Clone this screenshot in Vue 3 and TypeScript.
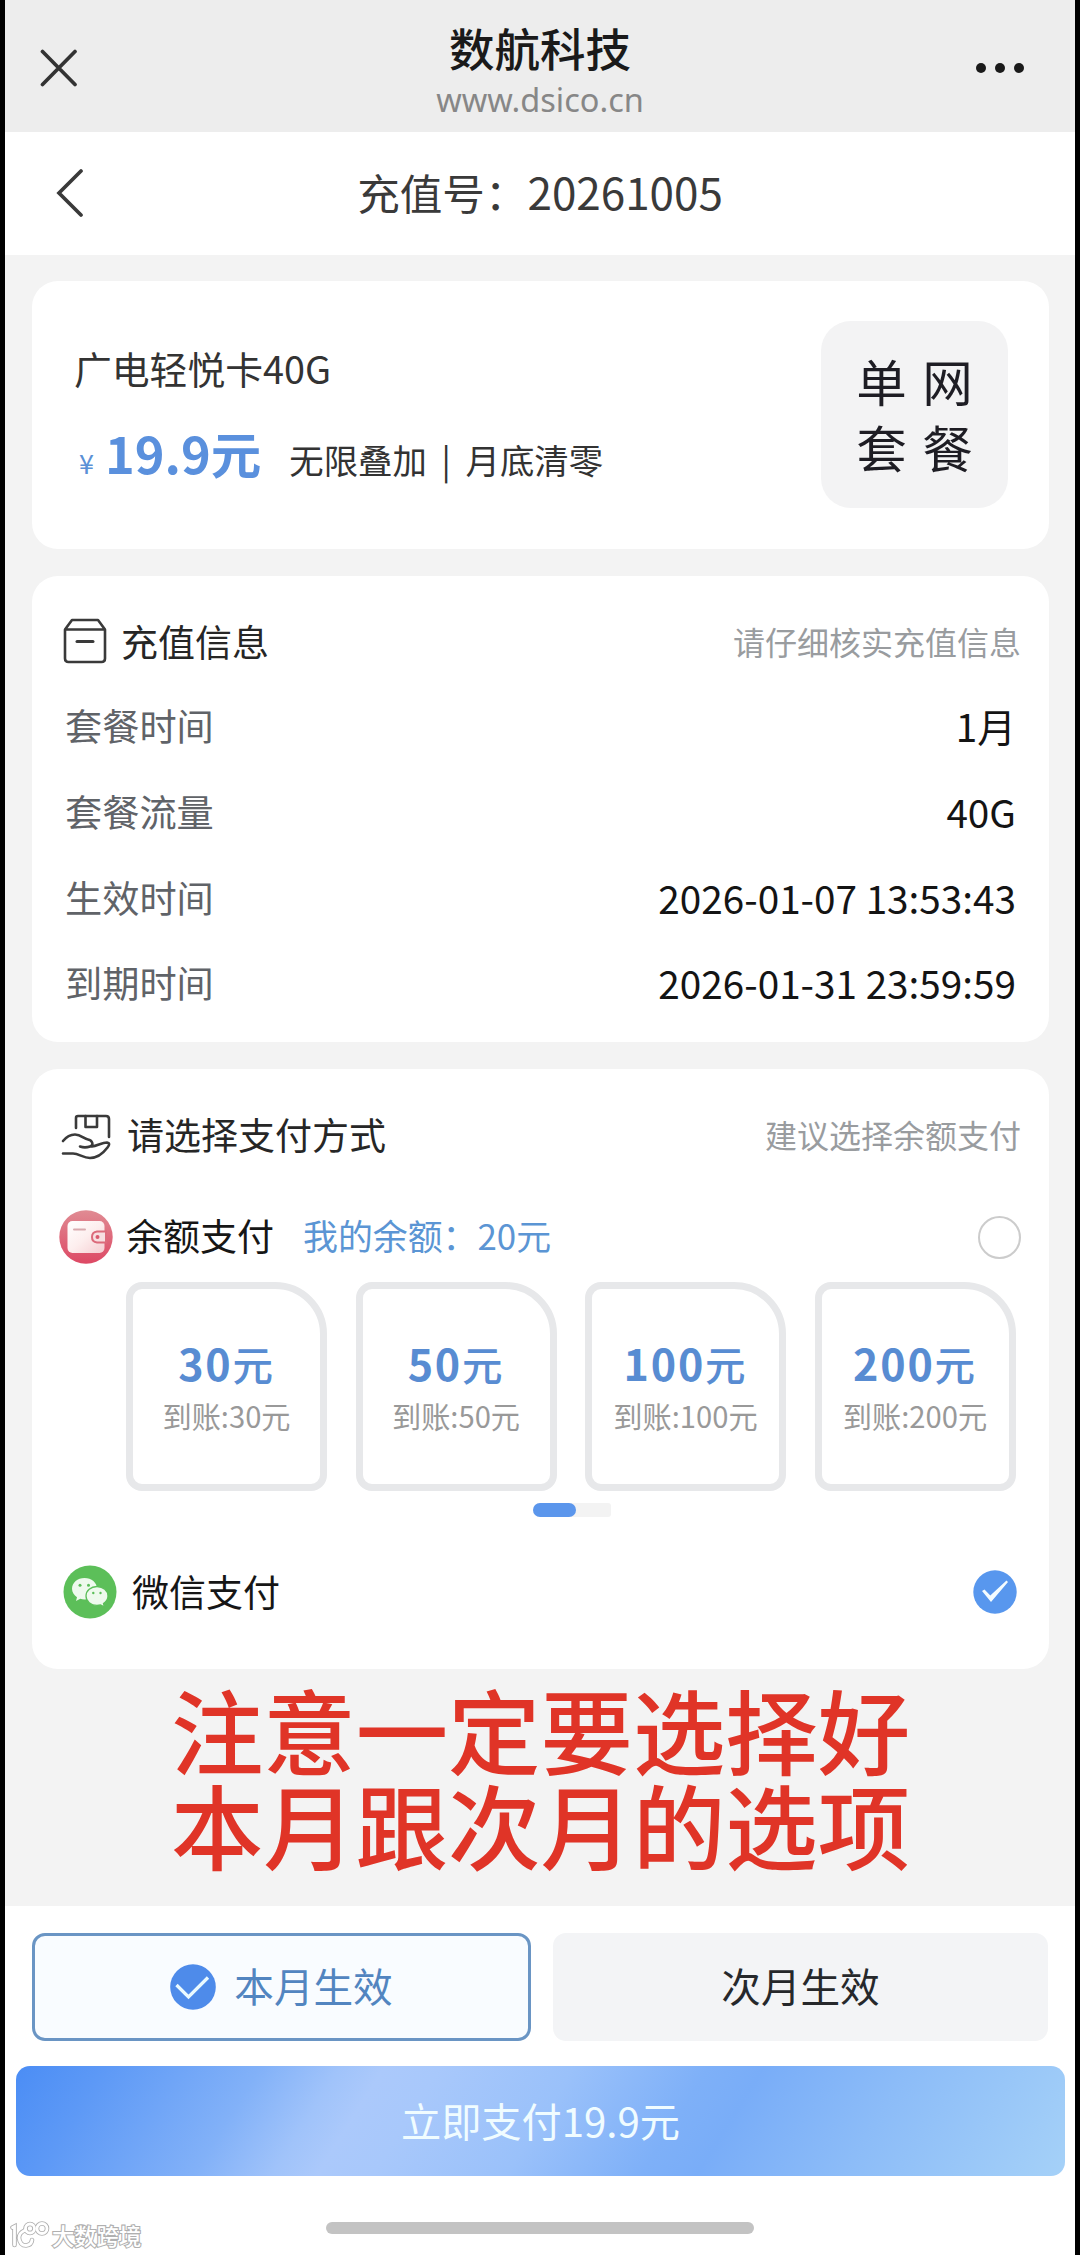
<script setup lang="ts">
import { ref } from 'vue'

interface InfoRow {
  label: string
  value: string
}

interface TopUp {
  amount: number
}

const infoRows: InfoRow[] = [
  { label: '套餐时间', value: '1月' },
  { label: '套餐流量', value: '40G' },
  { label: '生效时间', value: '2026-01-07 13:53:43' },
  { label: '到期时间', value: '2026-01-31 23:59:59' },
]

const topUps: TopUp[] = [{ amount: 30 }, { amount: 50 }, { amount: 100 }, { amount: 200 }]

const payMethod = ref<'balance' | 'wechat'>('wechat')
const period = ref<'current' | 'next'>('current')
</script>

<template>
  <div class="screen">
    <header class="titlebar">
      <svg class="close" viewBox="0 0 38 38"><path d="M2.5 2.5 35 35.5M35 2.5 2.5 35.5" /></svg>
      <div class="site">
        <div class="site-name">数航科技</div>
        <div class="site-url">www.dsico.cn</div>
      </div>
      <div class="more"><i></i><i></i><i></i></div>
    </header>

    <nav class="navbar">
      <svg class="back" viewBox="0 0 28 48"><path d="M25 2 3 24 25 46" /></svg>
      <div class="nav-title">充值号：<span>20261005</span></div>
    </nav>

    <main class="content">
      <section class="card plan">
        <div class="plan-info">
          <div class="plan-name">广电轻悦卡40G</div>
          <div class="plan-price">
            <span class="yen">¥</span>
            <span class="price">19.9元</span>
            <span class="terms">无限叠加 | 月底清零</span>
          </div>
        </div>
        <div class="plan-badge"><span>单网</span><span>套餐</span></div>
      </section>

      <section class="card info">
        <div class="card-head">
          <svg class="head-icon box" viewBox="0 0 44 46">
            <path d="M2 11.5 9 2H35L42 11.5M2 11.5H42V40.5Q42 44 38.5 44H5.5Q2 44 2 40.5Z" />
            <path d="M14 23.5H30" stroke-width="3" />
          </svg>
          <span class="head-title">充值信息</span>
          <span class="head-hint">请仔细核实充值信息</span>
        </div>
        <div v-for="row in infoRows" :key="row.label" class="info-row">
          <span class="label">{{ row.label }}</span>
          <span class="value">{{ row.value }}</span>
        </div>
      </section>

      <section class="card pay">
        <div class="card-head">
          <svg class="head-icon hand" viewBox="0 0 50 46">
            <path d="M15 14V4Q15 2 17 2H45Q48 2 48 5V23" />
            <path d="M24.5 2V13H36V2" />
            <path d="M2 27C6 22 10 20.5 14 20.5C20 20.5 23 25 27 25.5C31 26 33.5 31 29 32.5C26 33.5 22 33.5 19 32.5M31 32.5C36 32 41 28.5 46 28.5C49 29 48.5 31 46.5 33.5C42 39.5 36 44 29 44C22 44 18 39.5 12 39.5H2" />
          </svg>
          <span class="head-title">请选择支付方式</span>
          <span class="head-hint">建议选择余额支付</span>
        </div>

        <div class="method balance" @click="payMethod = 'balance'">
          <svg class="method-icon" viewBox="0 0 54 54">
            <defs>
              <linearGradient id="disc" x1="0" y1="0" x2="0" y2="1">
                <stop offset="0" stop-color="#e08b93" />
                <stop offset="1" stop-color="#dd4864" />
              </linearGradient>
              <linearGradient id="wallet" x1="0" y1="0" x2="1" y2="1">
                <stop offset="0" stop-color="#fff" />
                <stop offset=".5" stop-color="#fdeeee" />
                <stop offset="1" stop-color="#f5cdd1" />
              </linearGradient>
            </defs>
            <circle cx="27" cy="27" r="26.7" fill="url(#disc)" />
            <rect x="8.5" y="11" width="37" height="32" rx="5" fill="url(#wallet)" />
            <path d="M15 19.5H26" stroke="#d9a9ae" stroke-width="2" stroke-linecap="round" />
            <path d="M47 21.5H38Q33 22 33 27Q33 32 38 32.5H47Z" fill="#f7dfe1" stroke="#dc6b7b" stroke-width="2" />
            <circle cx="38.5" cy="27" r="2" fill="#d95a6e" />
          </svg>
          <span class="method-name">余额支付</span>
          <span class="method-note">我的余额：20元</span>
          <span class="radio"></span>
        </div>

        <div class="topups">
          <div v-for="item in topUps" :key="item.amount" class="topup">
            <div class="amount">{{ item.amount }}<span>元</span></div>
            <div class="credited">到账:{{ item.amount }}元</div>
          </div>
        </div>
        <div class="indicator"><i></i></div>

        <div class="method wechat" @click="payMethod = 'wechat'">
          <svg class="method-icon" viewBox="0 0 54 54">
            <circle cx="27" cy="27" r="26.5" fill="#5cbf59" />
            <path d="M21.5 13C14.5 13 9 17.7 9 23.8C9 27.3 11 30.3 14 32.3L13 36L17.3 33.8C18.7 34.2 20 34.5 21.5 34.5C28.5 34.5 34 29.8 34 23.8C34 17.7 28.5 13 21.5 13Z" fill="#eefaed" />
            <path d="M34 21.5C27.8 21.5 23 25.7 23 31C23 36.3 27.8 40.4 34 40.4C35.3 40.4 36.5 40.2 37.6 39.9L41.5 42L40.5 38.5C43.2 36.7 45 34 45 31C45 25.7 40.2 21.5 34 21.5Z" fill="#eefaed" stroke="#5cbf59" stroke-width="1.3" />
            <g fill="#5cbf59">
              <circle cx="17" cy="20.3" r="1.5" /><circle cx="25.5" cy="20.3" r="1.5" />
              <circle cx="30.3" cy="28" r="1.2" /><circle cx="37.5" cy="28" r="1.2" />
            </g>
          </svg>
          <span class="method-name">微信支付</span>
          <svg class="checked" viewBox="0 0 44 44">
            <circle cx="22" cy="22" r="21.7" fill="#5897ee" />
            <path d="M9 21 11.5 19.5 17.3 25.5 33.5 10.5 35 12 18 32Z" fill="#f4fcff" />
          </svg>
        </div>
      </section>

      <div class="notice">
        <div>注意一定要选择好</div>
        <div>本月跟次月的选项</div>
      </div>
    </main>

    <footer class="footer">
      <div class="periods">
        <button class="period active" @click="period = 'current'">
          <svg viewBox="0 0 46 46">
            <circle cx="23" cy="23" r="22.8" fill="#4e8bea" />
            <path d="M6.5 21 18.5 33 38 13.5" fill="none" stroke="#eafaff" stroke-width="3.3" />
          </svg>
          <span>本月生效</span>
        </button>
        <button class="period" @click="period = 'next'"><span>次月生效</span></button>
      </div>
      <button class="submit">立即支付19.9元</button>
      <div class="home-bar"></div>
    </footer>

    <div class="watermark">
      <svg viewBox="0 0 40 28">
        <g fill="none" stroke-linecap="round">
          <g stroke="#b0b0b0" stroke-width="4.6">
            <path d="M2.5 6.5 4.5 5.5V24M14.5 9.5Q9 12 9 17Q10 24.5 16 24.5Q21.5 24 22 19" />
            <circle cx="20" cy="7.5" r="4.5" /><circle cx="32" cy="7.5" r="5" />
          </g>
          <g stroke="#fff" stroke-width="2.8">
            <path d="M2.5 6.5 4.5 5.5V24M14.5 9.5Q9 12 9 17Q10 24.5 16 24.5Q21.5 24 22 19" />
            <circle cx="20" cy="7.5" r="4.5" /><circle cx="32" cy="7.5" r="5" />
          </g>
        </g>
      </svg>
      <span>大数跨境</span>
    </div>
  </div>
</template>

<style>
body {
  margin: 0;
  background: #000;
}
</style>

<style scoped>
.screen {
  position: relative;
  box-sizing: border-box;
  width: 1080px;
  height: 2255px;
  border-left: 5px solid #000;
  border-right: 5px solid #000;
  background: #f3f3f3;
  display: flex;
  flex-direction: column;
  overflow: hidden;
  font-family: 'Noto Sans CJK SC', 'Noto Sans', sans-serif;
  white-space: nowrap;
}

.titlebar {
  height: 132px;
  background: #ededed;
  display: grid;
  grid-template-columns: 200px 1fr 200px;
}

.close {
  width: 38px;
  height: 38px;
  margin: 49px 0 0 35px;
  fill: none;
  stroke: #333;
  stroke-width: 3.7;
  stroke-linecap: round;
}

.site {
  text-align: center;
}

.site-name {
  margin-top: 18px;
  font-size: 45.5px;
  line-height: 58px;
  font-weight: 500;
  color: #1a1a1a;
}

.site-url {
  font-family: 'Noto Sans', sans-serif;
  font-size: 32.5px;
  line-height: 44px;
  margin-top: 2px;
  color: #878787;
}

.more {
  display: flex;
  gap: 9px;
  margin: 63px 0 0 101px;
}

.more i {
  width: 10px;
  height: 10px;
  border-radius: 50%;
  background: #1a1a1a;
}

.navbar {
  height: 123px;
  background: #fff;
  display: grid;
  grid-template-columns: 200px 1fr 200px;
  align-items: center;
}

.back {
  width: 28px;
  height: 48px;
  margin: -2px 0 0 51px;
  fill: none;
  stroke: #3a3a3a;
  stroke-width: 3.7;
  stroke-linecap: round;
}

.nav-title {
  text-align: center;
  font-size: 42.6px;
  line-height: 60px;
  margin-top: -5px;
  color: #3a3a3a;
}

.nav-title span {
  font-size: 44px;
}

.content {
  flex: none;
  height: 1651px;
  box-sizing: border-box;
  padding: 26px 26px 0 27px;
}

.card {
  box-sizing: border-box;
  background: #fff;
  border-radius: 26px;
}

.plan {
  height: 268px;
  padding: 40px 41px 0 42px;
  display: flex;
  justify-content: space-between;
}

.plan-name {
  margin-top: 21px;
  font-size: 37.8px;
  line-height: 52px;
  color: #333;
}

.plan-price {
  margin-top: 22px;
  display: flex;
  align-items: baseline;
  line-height: 72px;
}

.yen {
  font-size: 27px;
  width: 31px;
  padding-left: 5px;
  box-sizing: border-box;
  color: #5b91d6;
}

.price {
  font-size: 50.5px;
  font-weight: 700;
  color: #5a90dd;
}

.terms {
  margin-left: 28px;
  font-size: 34.4px;
  word-spacing: 7px;
  color: #333;
}

.plan-badge {
  box-sizing: border-box;
  width: 187px;
  height: 187px;
  padding-bottom: 3px;
  border-radius: 30px;
  background: #f3f3f4;
  display: flex;
  flex-direction: column;
  align-items: center;
  justify-content: center;
}

.plan-badge span {
  font-size: 50.5px;
  line-height: 66.5px;
  letter-spacing: 15.5px;
  margin-right: -15.5px;
  color: #1e1d24;
}

.info {
  margin-top: 27px;
  height: 466px;
  padding: 24px 33px 0;
}

.card-head {
  height: 82px;
  display: flex;
  align-items: center;
}

.head-icon {
  fill: none;
  stroke: #3a3a3a;
  stroke-width: 2.6;
  stroke-linejoin: round;
  stroke-linecap: round;
  flex: none;
}

.box {
  width: 44px;
  height: 46px;
  margin-left: -2px;
}

.hand {
  width: 50px;
  height: 46px;
  margin: 6px 0 0 -4px;
}

.head-title {
  margin-left: 14px;
  font-size: 37px;
  color: #262626;
}

.pay .head-title {
  margin-left: 16px;
}

.head-hint {
  margin-left: auto;
  margin-right: -5px;
  font-size: 32px;
  color: #999c9f;
}

.info-row {
  height: 86px;
  display: flex;
  align-items: center;
  justify-content: space-between;
}

.info-row:last-child {
  height: 84px;
}

.label {
  font-size: 37.2px;
  color: #606368;
}

.value {
  font-size: 38.7px;
  color: #141414;
}

.pay {
  margin-top: 27px;
  height: 600px;
  padding: 24px 33px 0;
}

.method {
  display: flex;
  align-items: center;
}

.balance {
  margin-top: 13px;
  height: 94px;
}

.method-icon {
  width: 54px;
  height: 54px;
  flex: none;
}

.balance .method-icon {
  margin: 4px 0 0 -6px;
}

.method-name {
  margin-left: 13px;
  font-size: 37px;
  color: #161616;
}

.method-note {
  margin-left: 29px;
  font-size: 34.9px;
  color: #5b95d4;
}

.radio {
  box-sizing: border-box;
  width: 43px;
  height: 43px;
  margin: 4px -5px 0 auto;
  border: 2px solid #ccc;
  border-radius: 50%;
}

.topups {
  margin-left: 61px;
  display: flex;
  gap: 28.5px;
}

.topup {
  box-sizing: border-box;
  width: 201px;
  height: 209px;
  flex: none;
  border: 7px solid #e7e8ea;
  border-radius: 16px 52px 16px 16px;
  text-align: center;
  padding-top: 43px;
}

.amount {
  font-size: 43px;
  line-height: 60px;
  font-weight: 700;
  letter-spacing: 1.8px;
  color: #588cd2;
}

.amount span {
  font-size: 40.5px;
  font-weight: 500;
}

.credited {
  font-size: 29.2px;
  line-height: 42px;
  color: #999;
}

.indicator {
  width: 78px;
  height: 14px;
  margin: 12px 0 0 468px;
  border-radius: 7px 3px 3px 7px;
  background: #f3f3f3;
}

.indicator i {
  display: block;
  width: 43px;
  height: 14px;
  border-radius: 7px;
  background: #5b96ec;
}

.wechat {
  margin-top: 43px;
  height: 61px;
}

.wechat .method-icon {
  margin: 3px 0 0 -2px;
}

.wechat .method-name {
  margin-left: 15px;
}

.checked {
  width: 44px;
  height: 44px;
  margin: 3px -1px 0 auto;
}

.notice {
  margin-top: 12px;
  text-align: center;
  font-size: 92.4px;
  line-height: 95px;
  font-weight: 500;
  color: #e03427;
}

.footer {
  flex: 1;
  background: #fff;
  padding-top: 27px;
  display: flex;
  flex-direction: column;
}

.periods {
  display: grid;
  grid-template-columns: 499px 495px;
  column-gap: 22px;
  margin-left: 27px;
}

.period {
  box-sizing: border-box;
  height: 108px;
  border: 0;
  border-radius: 13px;
  background: #f3f4f6;
  display: flex;
  align-items: center;
  justify-content: center;
  font: 39.6px/54px 'Noto Sans CJK SC', sans-serif;
  color: #26282b;
  padding: 0 0 4px;
}

.period.active {
  border: 3px solid #6a95c4;
  background: #f9fcff;
  color: #5285c0;
}

.period svg {
  width: 46px;
  height: 46px;
  margin: 4px 18px 0 0;
}

.submit {
  width: 1049px;
  height: 110px;
  margin: 25px 0 0 11px;
  border: 0;
  border-radius: 14px;
  padding: 0 0 2px;
  background: linear-gradient(122deg, #4b8df5 0%, #5d99f6 8%, #82b1f8 22%, #a0c3fa 29%, #abc9fb 33%, #a8c8fb 38%, #9ac1fa 50%, #7eb0f8 62%, #79adf8 67%, #8cbcf8 80%, #a5d1f8 100%);
  font: 40.2px/54px 'Noto Sans CJK SC', sans-serif;
  color: #f0fcff;
}

.home-bar {
  width: 428px;
  height: 12px;
  margin: 46px 0 0 321px;
  border-radius: 6px;
  background: #c3c3c3;
}

.watermark {
  position: absolute;
  left: 5px;
  bottom: 5px;
  display: flex;
  align-items: center;
}

.watermark svg {
  width: 40px;
  height: 28px;
}

.watermark span {
  margin-left: 2px;
  font-size: 22.3px;
  line-height: 30px;
  font-weight: 500;
  color: #fff;
  -webkit-text-stroke: 2.2px #b0b0b0;
  paint-order: stroke fill;
}
</style>
